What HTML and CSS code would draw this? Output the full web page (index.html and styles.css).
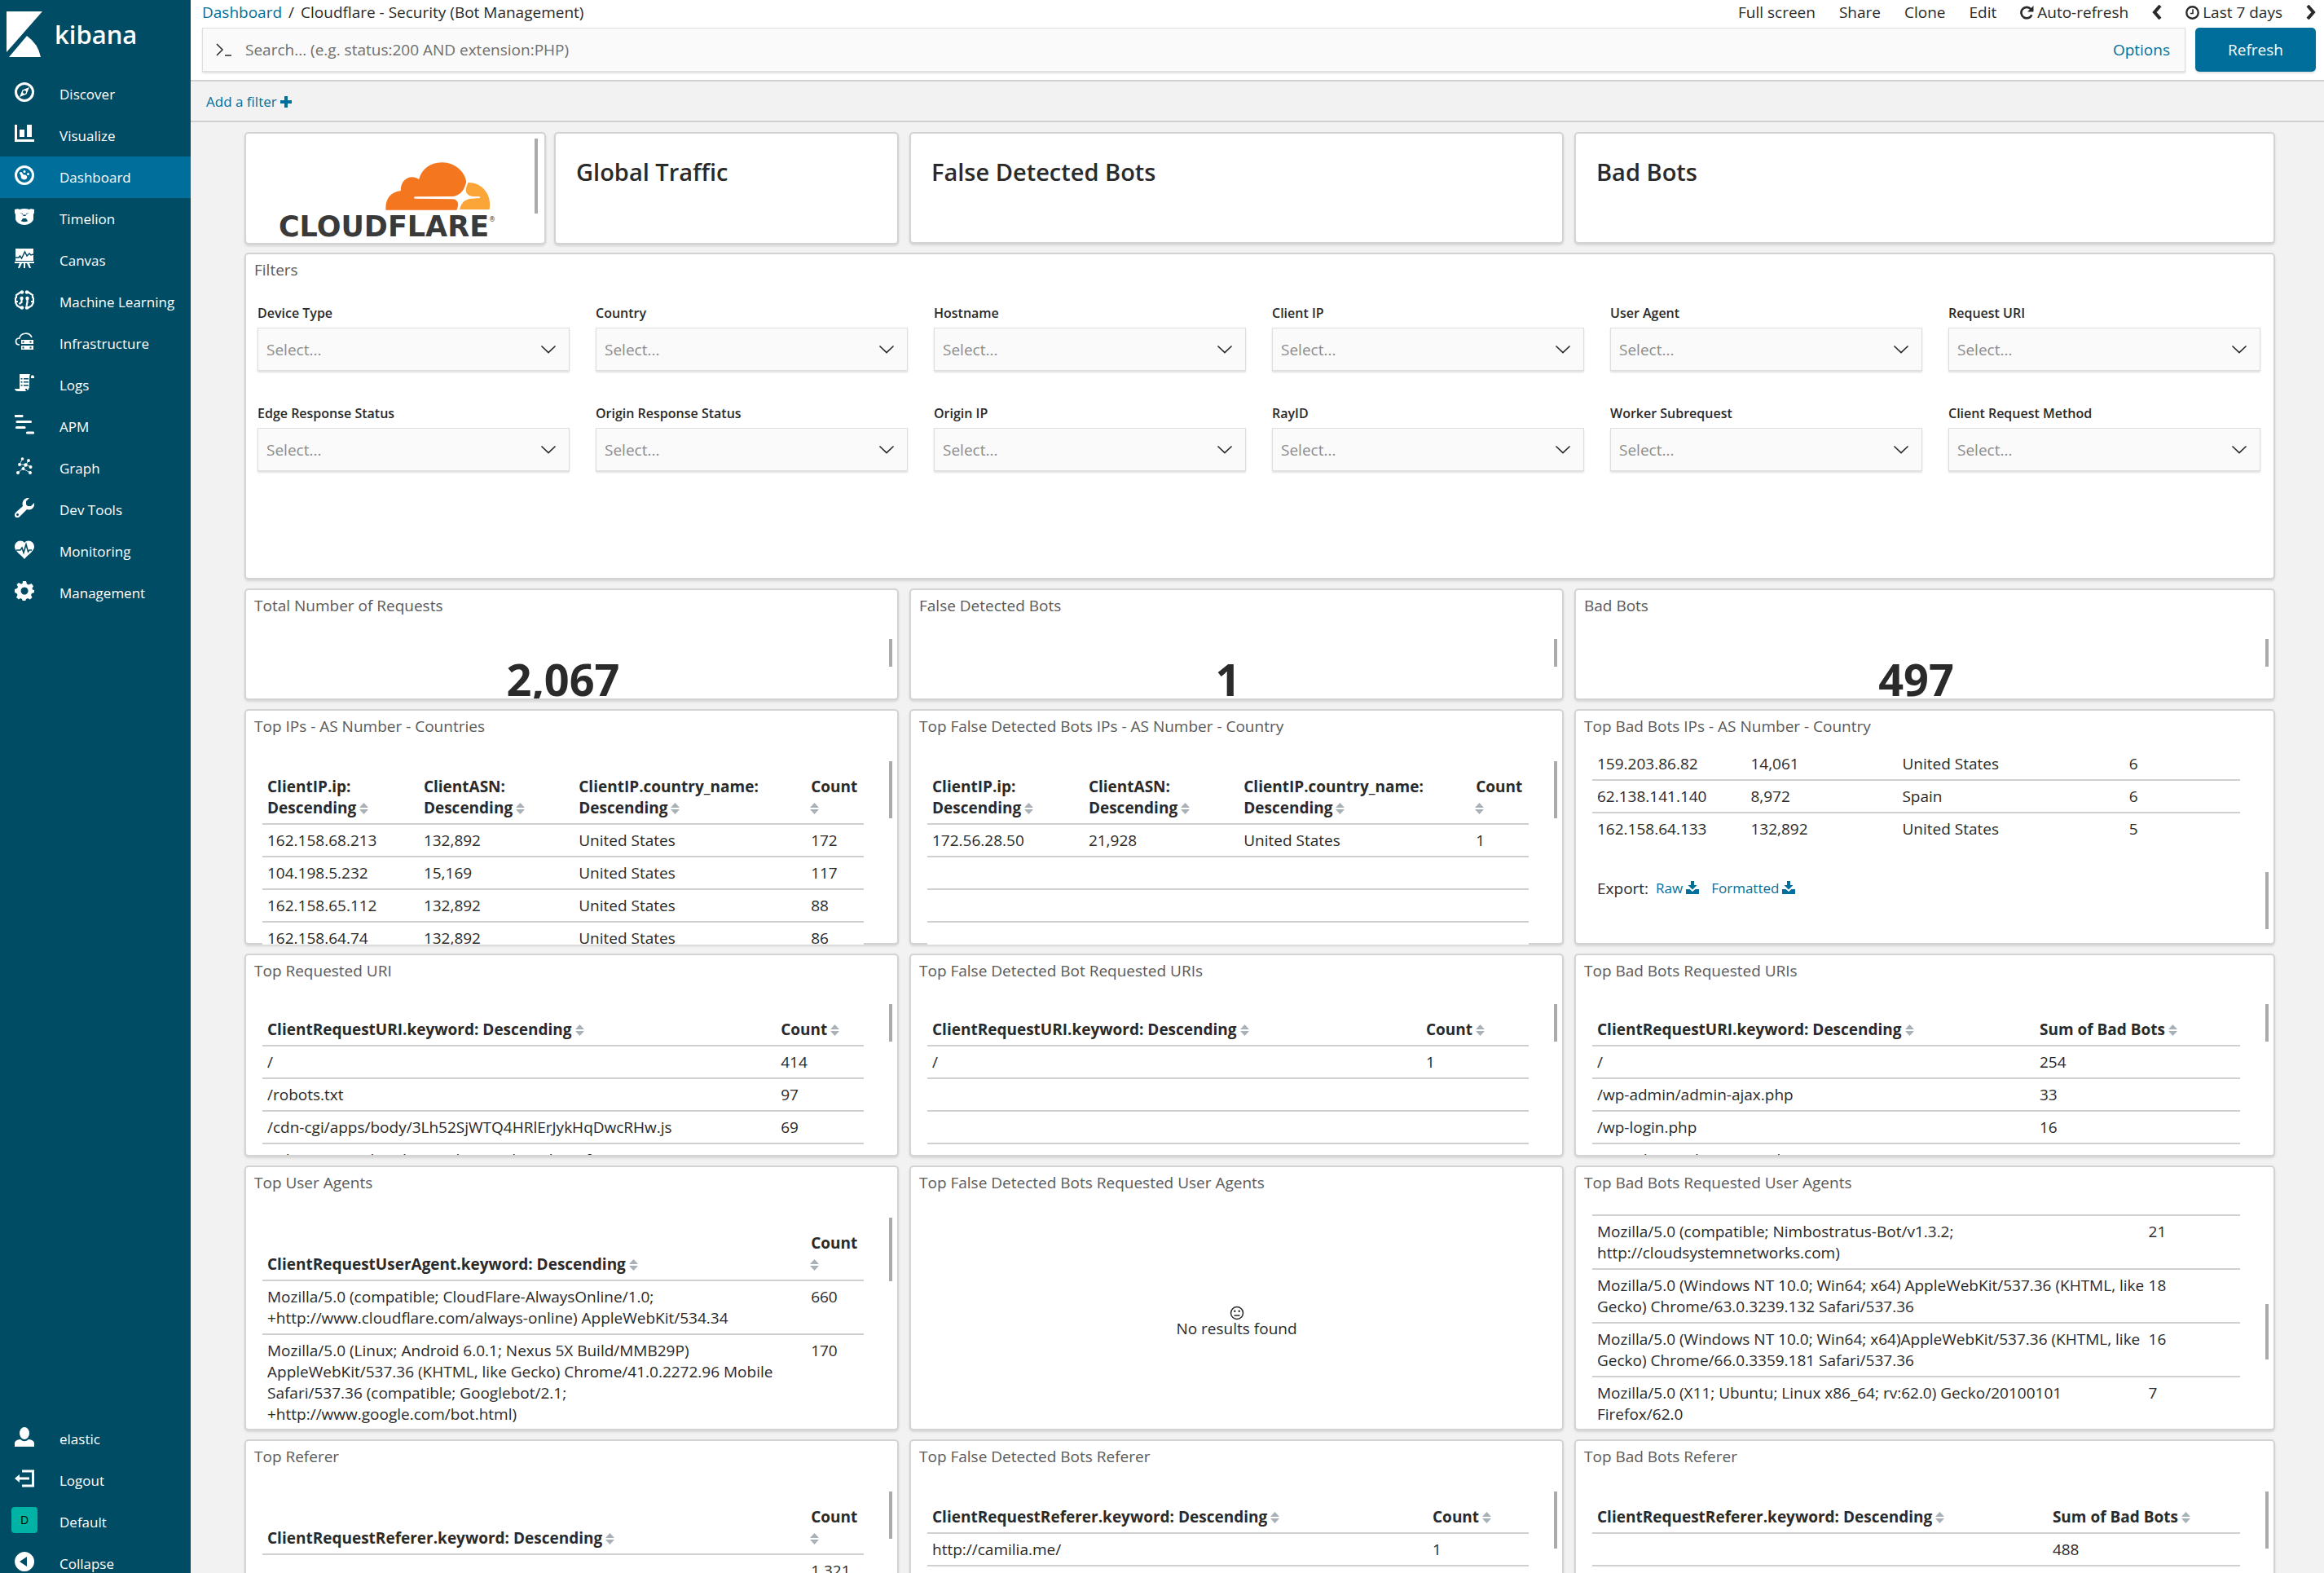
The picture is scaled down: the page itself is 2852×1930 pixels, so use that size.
FILE: index.html
```html
<!DOCTYPE html>
<html lang="en">
<head>
<meta charset="utf-8">
<title>Cloudflare - Security (Bot Management) - Kibana</title>
<link rel="stylesheet" href="styles.css">
</head>
<body>
<svg class="sprite" aria-hidden="true">
  <symbol id="sort" viewBox="0 0 11 16"><path d="M5.500 1l5.500 6H0zM5.500 15L0 9h11z"/></symbol>
  <symbol id="chevron" viewBox="0 0 18 10"><path d="M1 1l8 7.500L17 1" fill="none" stroke="currentColor" stroke-width="1.700" stroke-linecap="round"/></symbol>
  <symbol id="download" viewBox="0 0 16 16"><path d="M6 0h4v5h3.500L8 10.500 2.500 5H6z"/><path d="M0 10h4.500L8 13l3.500-3H16v6H0z"/></symbol>
</svg>
<div class="app">
  <nav class="sidebar" aria-label="Main">
    <a class="brand" href="#">
      <svg class="brand-mark" viewBox="0 0 44 56"><path d="M0 0h44L0 50z"/><path d="M25 30Q39 40 42 56H3z"/></svg>
      <span class="brand-name">kibana</span>
    </a>
    <div class="nav-list">
      <a class="nav-item" href="#"><svg class="nav-icon" viewBox="0 0 24 24"><circle cx="12" cy="12" r="10.500" fill="none" stroke="#fff" stroke-width="3"/><path d="M18 6l-3.500 8.500L6 18l3.500-8.500zm-6 4a2 2 0 1 0 .1 0z" fill-rule="evenodd"/></svg>Discover</a>
      <a class="nav-item" href="#"><svg class="nav-icon" viewBox="0 0 24 24"><path d="M0 1h3v18h21v3H0zM6 7h6v9H6zM15 1h6v15h-6z"/></svg>Visualize</a>
      <a class="nav-item nav-item-active" href="#" aria-current="page"><svg class="nav-icon" viewBox="0 0 24 24"><circle cx="12" cy="12" r="10.500" fill="none" stroke="#fff" stroke-width="3"/><circle cx="12" cy="7.500" r="1.500"/><circle cx="16.500" cy="10.500" r="1.500"/><path d="M6.500 8.500c1-1 2.500 0 3 1l1.500 2c3-.5 5 1.500 4 4-1 2.500-5 2.500-6.500.5C7 14 8.500 12.500 6.500 10.500c-.7-.7-.7-1.400 0-2z"/></svg>Dashboard</a>
      <a class="nav-item" href="#"><svg class="nav-icon" viewBox="0 0 24 24"><path fill-rule="evenodd" d="M0 3c3-1 5-1 6 0 4-1.500 8-1.500 12 0 1-1 3-1 6 0 .5 3 0 4-1 6v6c-1 4-6 7-11 7S2 19 1 15V9C0 7-.5 6 0 3zm6 4l4 2v-1zm12 0l-4 2v-1zM9.500 9.500c1 2 4 2 5 0zM8 17c0 1.500 8 1.500 8 0l-2-3h-4z"/></svg>Timelion</a>
      <a class="nav-item" href="#"><svg class="nav-icon" viewBox="0 0 24 24"><path d="M1 0h22v15H1zM0 16h24v2H0zM6 18h3l-3 6H4zM11 18h2v6h-2zM15 18h3l2 6h-2z"/><path d="M1 11h4l1.500-2 2 3 4-8 2.500 5 3-3 2 2 3-1" fill="none" stroke="#004c65" stroke-width="1.500"/></svg>Canvas</a>
      <a class="nav-item" href="#"><svg class="nav-icon" viewBox="0 0 24 24"><g fill="none" stroke="#fff" stroke-width="2.200"><path d="M8 2L2 6v4M1 9v6l2 4 5 3M16 2l6 4v4M23 9v6l-2 4-5 3M8.500 10v5l-3 2M15.500 10v5l-1 4M1 14h3M20 14h3"/></g><circle cx="9" cy="2.500" r="2.200"/><circle cx="15" cy="2.500" r="2.200"/><circle cx="9" cy="21.500" r="2.200"/><circle cx="15" cy="21.500" r="2.200"/><circle cx="8.500" cy="10" r="2.200"/><circle cx="15.500" cy="10" r="2.200"/></svg>Machine Learning</a>
      <a class="nav-item" href="#"><svg class="nav-icon" viewBox="0 0 24 24"><path d="M6 16C0 16 0 8 6 8c1-7 12-8 15-1" fill="none" stroke="#fff" stroke-width="1.700"/><path fill-rule="evenodd" d="M8 10h15v5H8zm1.500 1.500v2h2v-2zm9 0v2h2v-2zM8 17h15v5H8zm1.500 1.500v2h2v-2zm9 0v2h2v-2z"/></svg>Infrastructure</a>
      <a class="nav-item" href="#"><svg class="nav-icon" viewBox="0 0 24 24"><path fill-rule="evenodd" d="M6 1h13c-1 2-1 5-1 14 0 6-3 7-3 4H6zm1.500 5v1.500h2V6zm3.500 0v1.500h6V6zM7.500 10v1.500h2V10zm3.500 0v1.500h6V10zm-3.500 4v1.500h2V14zm3.500 0v1.500h6V14z"/><path d="M0 19h13c0 2 1 3 2 3H4c-2 0-4-1-4-3zM20 5c0-4 4-3 4 0v1h-4z"/></svg>Logs</a>
      <a class="nav-item" href="#"><svg class="nav-icon" viewBox="0 0 24 24"><path d="M0 1.500h9M3 8.500h16.500M2.500 15.500h9.500M15.500 22h7" fill="none" stroke="#fff" stroke-width="3.200" stroke-linecap="round"/></svg>APM</a>
      <a class="nav-item" href="#"><svg class="nav-icon" viewBox="0 0 24 24"><path d="M9.500 3L6 10h8l3-5M14 10l6 3M14 10l-4 5-6 5M10 15l9 5" fill="none" stroke="#fff" stroke-width=".8"/><circle cx="9.500" cy="3" r="1.800"/><circle cx="17" cy="5" r="1.900"/><circle cx="6" cy="10" r="1.900"/><circle cx="13.500" cy="10.500" r="2.200"/><circle cx="19.500" cy="13" r="2"/><circle cx="10.500" cy="15" r="2"/><circle cx="4" cy="20" r="2"/><circle cx="19" cy="20" r="2"/></svg>Graph</a>
      <a class="nav-item" href="#"><svg class="nav-icon" viewBox="0 0 24 24"><path fill-rule="evenodd" d="M18 0l-4 4v4l2 2h4l4-4c1 5-3 10-9 8L6 23c-4 3-8-1-5-5l9-8C8 4 13-1 18 0zM3.500 19a1.500 1.500 0 1 0 .1 0z"/></svg>Dev Tools</a>
      <a class="nav-item" href="#"><svg class="nav-icon" viewBox="0 0 24 24"><path d="M12 4C16-1 24 2 24 9c0 5-7 9-12 15C7 18 0 14 0 9 0 2 8-1 12 4z"/><path d="M2 13h5l2-3 2 6 3-10 2.500 9 1.500-2h3" fill="none" stroke="#004c65" stroke-width="1.600"/></svg>Monitoring</a>
      <a class="nav-item" href="#"><svg class="nav-icon" viewBox="0 0 24 24"><path fill-rule="evenodd" d="M10 0h4l1 3.500 2 1L20.500 3 23 6l-1.500 3 .5 1.500 2 .5v3l-3 1-1 2 1.500 3-2.500 2.500-3-1.500-2 1-1 3h-3l-1-3-2-1L5 22.500 2 20l1.500-3-1-2L0 14v-4l3-1 1-2-1.500-3L5 2l3 1.500 1.500-.5zM12 7.500a4.500 4.500 0 1 0 .1 0z"/></svg>Management</a>
    </div>
    <div class="nav-list nav-list-bottom">
      <a class="nav-item" href="#"><svg class="nav-icon" viewBox="0 0 24 24"><ellipse cx="12" cy="7.500" rx="6" ry="7.500"/><path d="M0 24v-4c0-3 3-4.500 7-5 3 3 7 3 10 0 4 .5 7 2 7 5v4z"/></svg>elastic</a>
      <a class="nav-item" href="#"><svg class="nav-icon" viewBox="0 0 24 24"><path d="M9 3h13.500v18H9M5 12h13" fill="none" stroke="#fff" stroke-width="3"/><path d="M0 12l6-5v10z"/></svg>Logout</a>
      <a class="nav-item" href="#"><span class="space-badge">D</span>Default</a>
      <button class="nav-item" type="button"><svg class="nav-icon" viewBox="0 0 24 24"><path fill-rule="evenodd" d="M12 0a12 12 0 1 0 .1 0zM15 6v12l-9-6z"/></svg>Collapse</button>
    </div>
  </nav>

  <div class="main">
    <header class="topbar">
      <div class="topbar-row">
        <div class="crumbs"><a class="link" href="#">Dashboard</a><span class="crumb-sep">/</span><span>Cloudflare - Security (Bot Management)</span></div>
        <div class="menu">
          <button class="menu-item" type="button">Full screen</button>
          <button class="menu-item" type="button">Share</button>
          <button class="menu-item" type="button">Clone</button>
          <button class="menu-item" type="button">Edit</button>
          <button class="menu-item" type="button"><svg class="menu-icon" viewBox="0 0 16 16"><path d="M13.500 10.500A6.300 6.300 0 1 1 12.500 4" fill="none" stroke="currentColor" stroke-width="2.500"/><path d="M15.500 0v7h-7z"/></svg>Auto-refresh</button>
          <button class="menu-item" type="button" aria-label="Back"><svg class="menu-arrow" viewBox="0 0 12 18"><path d="M10 1L3 9l7 8" fill="none" stroke="currentColor" stroke-width="4"/></svg></button>
          <button class="menu-item" type="button"><svg class="menu-icon" viewBox="0 0 16 16"><circle cx="8" cy="8" r="6.800" fill="none" stroke="currentColor" stroke-width="2.200"/><path d="M8.500 4v5H5.500" fill="none" stroke="currentColor" stroke-width="1.500"/></svg>Last 7 days</button>
          <button class="menu-item" type="button" aria-label="Forward"><svg class="menu-arrow" viewBox="0 0 12 18"><path d="M2 1l7 8-7 8" fill="none" stroke="currentColor" stroke-width="4"/></svg></button>
        </div>
      </div>
      <form class="query">
        <div class="query-box">
          <svg class="query-icon" viewBox="0 0 20 16"><path d="M1 1l7 7-7 7M11 15h8" fill="none" stroke="currentColor" stroke-width="1.500"/></svg>
          <input class="query-input" type="text" aria-label="Search" placeholder="Search... (e.g. status:200 AND extension:PHP)">
          <a class="link" href="#">Options</a>
        </div>
        <button class="refresh" type="button">Refresh</button>
      </form>
    </header>
    <div class="filterbar"><a class="link filter-add" href="#">Add a filter<svg class="plus-icon" viewBox="0 0 14 14"><path d="M5 0h4v5h5v4H9v5H5V9H0V5h5z"/></svg></a></div>

    <main class="dashboard">
      <div class="split">
        <section class="panel">
          <div class="logo-wrap">
            <div class="cf-logo">
              <svg class="cf-cloud" viewBox="558 177 386 177"><path fill="#f4761f" d="M559 353C555 312 580 284 614 283C612 255 630 232 656 232C668 232 675 236 681 240C690 205 720 178 766 178C815 178 852 215 855 250C848 277 838 297 808 303L665 304Q661 308 665 311L805 313C820 314 828 325 824 340L820 353Z"/><path fill="#fba437" d="M862 252C910 250 952 295 940 351L831 351C835 330 848 312 875 311L905 309Q907 306 905 304L880 303C860 300 850 290 855 270Z"/></svg>
              <span class="cf-name">CLOUDFLARE<span class="cf-reg">®</span></span>
            </div>
          </div>
          <span class="thumb thumb-logo"></span>
        </section>
        <section class="panel"><h1 class="heading">Global Traffic</h1></section>
      </div>
      <section class="panel"><h1 class="heading">False Detected Bots</h1></section>
      <section class="panel"><h1 class="heading">Bad Bots</h1></section>

      <section class="panel panel-wide">
        <h2 class="panel-title">Filters</h2>
        <form class="filters">
          <div class="field"><label for="f1">Device Type</label><div class="pick"><select id="f1"><option>Select...</option></select><svg><use href="#chevron"/></svg></div></div>
          <div class="field"><label for="f2">Country</label><div class="pick"><select id="f2"><option>Select...</option></select><svg><use href="#chevron"/></svg></div></div>
          <div class="field"><label for="f3">Hostname</label><div class="pick"><select id="f3"><option>Select...</option></select><svg><use href="#chevron"/></svg></div></div>
          <div class="field"><label for="f4">Client IP</label><div class="pick"><select id="f4"><option>Select...</option></select><svg><use href="#chevron"/></svg></div></div>
          <div class="field"><label for="f5">User Agent</label><div class="pick"><select id="f5"><option>Select...</option></select><svg><use href="#chevron"/></svg></div></div>
          <div class="field"><label for="f6">Request URI</label><div class="pick"><select id="f6"><option>Select...</option></select><svg><use href="#chevron"/></svg></div></div>
          <div class="field"><label for="f7">Edge Response Status</label><div class="pick"><select id="f7"><option>Select...</option></select><svg><use href="#chevron"/></svg></div></div>
          <div class="field"><label for="f8">Origin Response Status</label><div class="pick"><select id="f8"><option>Select...</option></select><svg><use href="#chevron"/></svg></div></div>
          <div class="field"><label for="f9">Origin IP</label><div class="pick"><select id="f9"><option>Select...</option></select><svg><use href="#chevron"/></svg></div></div>
          <div class="field"><label for="f10">RayID</label><div class="pick"><select id="f10"><option>Select...</option></select><svg><use href="#chevron"/></svg></div></div>
          <div class="field"><label for="f11">Worker Subrequest</label><div class="pick"><select id="f11"><option>Select...</option></select><svg><use href="#chevron"/></svg></div></div>
          <div class="field"><label for="f12">Client Request Method</label><div class="pick"><select id="f12"><option>Select...</option></select><svg><use href="#chevron"/></svg></div></div>
        </form>
      </section>

      <section class="panel"><h2 class="panel-title">Total Number of Requests</h2><div class="panel-body"><p class="metric">2,067</p></div><span class="thumb thumb-metric"></span></section>
      <section class="panel"><h2 class="panel-title">False Detected Bots</h2><div class="panel-body"><p class="metric">1</p></div><span class="thumb thumb-metric"></span></section>
      <section class="panel"><h2 class="panel-title">Bad Bots</h2><div class="panel-body"><p class="metric">497</p></div><span class="thumb thumb-metric"></span></section>

      <section class="panel">
        <h2 class="panel-title">Top IPs - AS Number - Countries</h2>
        <div class="panel-body panel-body-bleed">
          <table class="data">
            <colgroup><col style="width:26%"><col style="width:25.8%"><col style="width:38.6%"><col></colgroup>
            <thead><tr><th>ClientIP.ip: Descending <svg class="sort"><use href="#sort"/></svg></th><th>ClientASN: Descending <svg class="sort"><use href="#sort"/></svg></th><th>ClientIP.country_name: Descending <svg class="sort"><use href="#sort"/></svg></th><th>Count <svg class="sort"><use href="#sort"/></svg></th></tr></thead>
            <tbody>
              <tr><td>162.158.68.213</td><td>132,892</td><td>United States</td><td>172</td></tr>
              <tr><td>104.198.5.232</td><td>15,169</td><td>United States</td><td>117</td></tr>
              <tr><td>162.158.65.112</td><td>132,892</td><td>United States</td><td>88</td></tr>
              <tr><td>162.158.64.74</td><td>132,892</td><td>United States</td><td>86</td></tr>
            </tbody>
          </table>
        </div>
        <span class="thumb thumb-ips"></span>
      </section>
      <section class="panel">
        <h2 class="panel-title">Top False Detected Bots IPs - AS Number - Country</h2>
        <div class="panel-body panel-body-bleed">
          <table class="data">
            <colgroup><col style="width:26%"><col style="width:25.8%"><col style="width:38.6%"><col></colgroup>
            <thead><tr><th>ClientIP.ip: Descending <svg class="sort"><use href="#sort"/></svg></th><th>ClientASN: Descending <svg class="sort"><use href="#sort"/></svg></th><th>ClientIP.country_name: Descending <svg class="sort"><use href="#sort"/></svg></th><th>Count <svg class="sort"><use href="#sort"/></svg></th></tr></thead>
            <tbody>
              <tr><td>172.56.28.50</td><td>21,928</td><td>United States</td><td>1</td></tr>
              <tr><td colspan="4">&nbsp;</td></tr>
              <tr><td colspan="4">&nbsp;</td></tr>
              <tr><td colspan="4">&nbsp;</td></tr>
            </tbody>
          </table>
        </div>
        <span class="thumb thumb-ips"></span>
      </section>
      <section class="panel">
        <h2 class="panel-title">Top Bad Bots IPs - AS Number - Country</h2>
        <div class="panel-body panel-body-mid">
          <table class="data data-last">
            <colgroup><col style="width:23.7%"><col style="width:23.4%"><col style="width:35%"><col></colgroup>
            <tbody>
              <tr><td>159.203.86.82</td><td>14,061</td><td>United States</td><td>6</td></tr>
              <tr><td>62.138.141.140</td><td>8,972</td><td>Spain</td><td>6</td></tr>
              <tr><td>162.158.64.133</td><td>132,892</td><td>United States</td><td>5</td></tr>
            </tbody>
          </table>
          <p class="export"><span>Export:</span><a class="link" href="#">Raw<svg class="dl"><use href="#download"/></svg></a><a class="link" href="#">Formatted<svg class="dl"><use href="#download"/></svg></a></p>
        </div>
        <span class="thumb thumb-ips-end"></span>
      </section>

      <section class="panel">
        <h2 class="panel-title">Top Requested URI</h2>
        <div class="panel-body panel-body-tight">
          <table class="data">
            <colgroup><col style="width:85.4%"><col></colgroup>
            <thead><tr><th>ClientRequestURI.keyword: Descending <svg class="sort"><use href="#sort"/></svg></th><th>Count <svg class="sort"><use href="#sort"/></svg></th></tr></thead>
            <tbody>
              <tr><td>/</td><td>414</td></tr>
              <tr><td>/robots.txt</td><td>97</td></tr>
              <tr><td>/cdn-cgi/apps/body/3Lh52SjWTQ4HRlErJykHqDwcRHw.js</td><td>69</td></tr>
              <tr><td>/cdn-cgi/apps/head/xNmKbPmY3dAUOkMmfDrtvpMKA.js</td><td>54</td></tr>
            </tbody>
          </table>
        </div>
        <span class="thumb thumb-uri"></span>
      </section>
      <section class="panel">
        <h2 class="panel-title">Top False Detected Bot Requested URIs</h2>
        <div class="panel-body panel-body-tight">
          <table class="data">
            <colgroup><col style="width:82.1%"><col></colgroup>
            <thead><tr><th>ClientRequestURI.keyword: Descending <svg class="sort"><use href="#sort"/></svg></th><th>Count <svg class="sort"><use href="#sort"/></svg></th></tr></thead>
            <tbody>
              <tr><td>/</td><td>1</td></tr>
              <tr><td colspan="2">&nbsp;</td></tr>
              <tr><td colspan="2">&nbsp;</td></tr>
              <tr><td colspan="2">&nbsp;</td></tr>
            </tbody>
          </table>
        </div>
        <span class="thumb thumb-uri"></span>
      </section>
      <section class="panel">
        <h2 class="panel-title">Top Bad Bots Requested URIs</h2>
        <div class="panel-body panel-body-tight">
          <table class="data">
            <colgroup><col style="width:68.3%"><col></colgroup>
            <thead><tr><th>ClientRequestURI.keyword: Descending <svg class="sort"><use href="#sort"/></svg></th><th>Sum of Bad Bots <svg class="sort"><use href="#sort"/></svg></th></tr></thead>
            <tbody>
              <tr><td>/</td><td>254</td></tr>
              <tr><td>/wp-admin/admin-ajax.php</td><td>33</td></tr>
              <tr><td>/wp-login.php</td><td>16</td></tr>
              <tr><td>/wp-admin/admin-post.php</td><td>13</td></tr>
            </tbody>
          </table>
        </div>
        <span class="thumb thumb-uri"></span>
      </section>

      <section class="panel">
        <h2 class="panel-title">Top User Agents</h2>
        <div class="panel-body">
          <table class="data">
            <colgroup><col style="width:90.4%"><col></colgroup>
            <thead><tr><th>ClientRequestUserAgent.keyword: Descending <svg class="sort"><use href="#sort"/></svg></th><th>Count <svg class="sort"><use href="#sort"/></svg></th></tr></thead>
            <tbody>
              <tr><td>Mozilla/5.0 (compatible; CloudFlare-AlwaysOnline/1.0; +http://www.cloudflare.com/always-online) AppleWebKit/534.34</td><td>660</td></tr>
              <tr><td>Mozilla/5.0 (Linux; Android 6.0.1; Nexus 5X Build/MMB29P) AppleWebKit/537.36 (KHTML, like Gecko) Chrome/41.0.2272.96 Mobile Safari/537.36 (compatible; Googlebot/2.1; +http://www.google.com/bot.html)</td><td>170</td></tr>
            </tbody>
          </table>
        </div>
        <span class="thumb thumb-agents"></span>
      </section>
      <section class="panel">
        <h2 class="panel-title">Top False Detected Bots Requested User Agents</h2>
        <div class="panel-body panel-body-empty">
          <svg class="meh" viewBox="0 0 18 18"><circle cx="9" cy="9" r="7.500" fill="none" stroke="currentColor" stroke-width="1.500"/><circle cx="6.300" cy="6.800" r="1.200"/><circle cx="11.700" cy="6.800" r="1.200"/><path d="M5.500 12h7" stroke="currentColor" stroke-width="1.500"/></svg>
          <p class="empty-text">No results found</p>
        </div>
      </section>
      <section class="panel">
        <h2 class="panel-title">Top Bad Bots Requested User Agents</h2>
        <div class="panel-body panel-body-cut">
          <table class="data data-last">
            <colgroup><col style="width:85.6%"><col></colgroup>
            <tbody>
              <tr><td>Mozilla/5.0 (compatible; Nimbostratus-Bot/v1.3.2; http://cloudsystemnetworks.com)</td><td>21</td></tr>
              <tr><td>Mozilla/5.0 (Windows NT 10.0; Win64; x64) AppleWebKit/537.36 (KHTML, like Gecko) Chrome/63.0.3239.132 Safari/537.36</td><td>18</td></tr>
              <tr><td>Mozilla/5.0 (Windows NT 10.0; Win64; x64)AppleWebKit/537.36 (KHTML, like Gecko) Chrome/66.0.3359.181 Safari/537.36</td><td>16</td></tr>
              <tr><td>Mozilla/5.0 (X11; Ubuntu; Linux x86_64; rv:62.0) Gecko/20100101 Firefox/62.0</td><td>7</td></tr>
            </tbody>
          </table>
        </div>
        <span class="thumb thumb-agents-mid"></span>
      </section>

      <section class="panel">
        <h2 class="panel-title">Top Referer</h2>
        <div class="panel-body">
          <table class="data">
            <colgroup><col style="width:90.4%"><col></colgroup>
            <thead><tr><th>ClientRequestReferer.keyword: Descending <svg class="sort"><use href="#sort"/></svg></th><th>Count <svg class="sort"><use href="#sort"/></svg></th></tr></thead>
            <tbody><tr><td>&nbsp;</td><td>1,321</td></tr></tbody>
          </table>
        </div>
        <span class="thumb thumb-referer"></span>
      </section>
      <section class="panel">
        <h2 class="panel-title">Top False Detected Bots Referer</h2>
        <div class="panel-body">
          <table class="data">
            <colgroup><col style="width:83.2%"><col></colgroup>
            <thead><tr><th>ClientRequestReferer.keyword: Descending <svg class="sort"><use href="#sort"/></svg></th><th>Count <svg class="sort"><use href="#sort"/></svg></th></tr></thead>
            <tbody><tr><td>http://camilia.me/</td><td>1</td></tr></tbody>
          </table>
        </div>
        <span class="thumb thumb-ips"></span>
      </section>
      <section class="panel">
        <h2 class="panel-title">Top Bad Bots Referer</h2>
        <div class="panel-body">
          <table class="data">
            <colgroup><col style="width:70.3%"><col></colgroup>
            <thead><tr><th>ClientRequestReferer.keyword: Descending <svg class="sort"><use href="#sort"/></svg></th><th>Sum of Bad Bots <svg class="sort"><use href="#sort"/></svg></th></tr></thead>
            <tbody><tr><td>&nbsp;</td><td>488</td></tr></tbody>
          </table>
        </div>
        <span class="thumb thumb-ips"></span>
      </section>
    </main>
  </div>
</div>
</body>
</html>
```

FILE: styles.css
```css
* { box-sizing: border-box; }

body {
  margin: 0;
  font: 19px/26px "Open Sans", "Noto Sans", sans-serif;
  color: #2a2a2a;
  background: #f2f2f2;
}

h1, h2, p { margin: 0; }

button, input, select { font: inherit; color: inherit; }

button { border: 0; background: none; padding: 0; cursor: pointer; }

svg { fill: currentColor; }

.sprite { display: none; }

.link { color: #006f9c; text-decoration: none; }

.app { display: flex; height: 100vh; overflow: hidden; }

/* Sidebar */
.sidebar {
  flex: 0 0 234px;
  display: flex;
  flex-direction: column;
  background: #004c65;
  color: #fff;
  overflow: hidden;
}

.brand {
  display: flex;
  gap: 15px;
  height: 90px;
  padding: 14px 8px 0;
  color: #fff;
  text-decoration: none;
}

.brand-mark { width: 44px; height: 56px; }

.brand-name { font-size: 31px; font-weight: 600; line-height: 56px; }

.nav-list { display: flex; flex-direction: column; }

.nav-list-bottom { margin-top: auto; margin-bottom: -14px; }

.nav-item {
  display: flex;
  align-items: center;
  height: 51px;
  flex: none;
  padding-left: 18px;
  font-size: 17px;
  color: #fff;
  text-decoration: none;
}

.nav-item-active { background: #006e9b; }

.nav-icon { width: 24px; height: 24px; margin: 0 31px 5px 0; }

.space-badge {
  width: 32px;
  margin: 0 27px 5px -4px;
  border-radius: 4px;
  background: #00b3a4;
  color: #000;
  font-size: 14px;
  line-height: 32px;
  text-align: center;
}

/* Top bar */
.main { flex: 1; min-width: 0; display: flex; flex-direction: column; }

.topbar {
  flex: none;
  padding: 2px 10px 10px 14px;
  background: #fff;
  border-bottom: 2px solid #d0d0d0;
}

.topbar-row { display: flex; justify-content: space-between; margin-bottom: 6px; }

.crumb-sep { margin: 0 8px; }

.menu { display: flex; gap: 29px; }

.menu-item { display: flex; align-items: center; }

.menu-icon { width: 17px; height: 17px; margin-right: 4px; }

.menu-arrow { width: 12px; height: 18px; }

.query { display: flex; gap: 12px; }

.query-box {
  flex: 1;
  display: flex;
  align-items: center;
  gap: 16px;
  height: 54px;
  padding: 0 18px 0 16px;
  background: #fafafa;
  border: 1px solid #dedede;
  box-shadow: 0 2px 2px rgba(0, 0, 0, .12);
}

.query-icon { width: 20px; height: 16px; }

.query-input {
  flex: 1;
  min-width: 0;
  padding: 0;
  border: 0;
  outline: 0;
  background: none;
}

.query-input::placeholder { color: #6e6e6e; opacity: 1; }

.refresh {
  width: 148px;
  height: 54px;
  border-radius: 5px;
  background: #006e9b;
  color: #fff;
  box-shadow: 0 2px 2px rgba(0, 0, 0, .12);
}

.filterbar {
  flex: none;
  padding: 12px 19px 10px;
  border-bottom: 2px solid #d0d0d0;
}

.filter-add { display: flex; align-items: center; gap: 4px; font-size: 17px; }

.plus-icon { width: 14px; height: 14px; }

/* Dashboard grid */
.dashboard {
  display: grid;
  grid-template-columns: 803fr 803fr 860fr;
  grid-template-rows: 137px 401px 137px 289px 249px 325px 288px;
  gap: 11px 13px;
  flex: 1;
  min-height: 0;
  overflow: hidden;
  padding: 12px 60px 0 66px;
}

.split { display: grid; grid-template-columns: 370fr 423fr; gap: 10px; }

.panel {
  position: relative;
  display: flex;
  flex-direction: column;
  min-width: 0;
  background: #fff;
  border: 2px solid #d3d3d3;
  border-radius: 5px;
  box-shadow: 0 2px 3px rgba(0, 0, 0, .12);
}

.panel-wide { grid-column: 1 / -1; }

.heading { padding: 28px 25px 0; font-size: 29px; font-weight: 600; line-height: 38px; }

.panel-title {
  flex: none;
  padding: 6px 10px 26px;
  font-size: 19px;
  font-weight: 400;
  color: #5a5a5a;
}

.panel-body {
  flex: 1;
  min-height: 0;
  overflow: hidden;
  padding: 16px 41px 0 20px;
}

/* Content of this list runs over the panel's lower border */
.panel-body-bleed { margin-bottom: -2px; }

.panel-body-tight { padding-top: 14px; }

.panel-body-mid { margin-top: -12px; padding-top: 0; }

.panel-body-cut { padding-top: 0; }

.panel-body-cut .data { border-top: 2px solid #d0d0d0; }

.panel-body-cut .data td + td { padding-left: 2px; }

.panel-body-empty {
  display: flex;
  flex-direction: column;
  align-items: center;
  justify-content: center;
  padding: 0;
}

.meh { width: 18px; height: 18px; }

.empty-text { line-height: 21px; }

.metric {
  font-size: 54px;
  font-weight: 700;
  line-height: 70px;
  text-align: center;
}

/* Overlay scroll thumbs */
.thumb {
  position: absolute;
  right: 6px;
  width: 4px;
  background: #aaa;
}

.thumb-logo { top: 6px; right: 8px; height: 92px; }
.thumb-metric { top: 60px; height: 34px; }
.thumb-ips { top: 62px; height: 70px; }
.thumb-ips-end { top: 198px; height: 70px; }
.thumb-uri { top: 60px; height: 46px; }
.thumb-agents { top: 62px; height: 78px; }
.thumb-agents-mid { top: 168px; height: 68px; }
.thumb-referer { top: 62px; height: 58px; }

/* Logo panel */
.logo-wrap { display: flex; justify-content: center; padding: 35px 20px 0 0; }

.cf-logo { display: flex; flex-direction: column; align-items: flex-end; }

.cf-cloud { width: 129px; height: 59px; margin-right: 6px; }

.cf-name {
  display: flex;
  font-family: "DejaVu Sans", sans-serif;
  font-size: 35px;
  font-weight: 700;
  line-height: 40px;
  color: #3a3a3a;
}

.cf-reg { font-size: 8px; font-weight: 400; line-height: 24px; }

/* Filter form */
.filters {
  display: grid;
  grid-template-columns: repeat(6, 1fr);
  gap: 41px 32px;
  padding: 3px 16px 0 14px;
}

.field { display: flex; flex-direction: column; gap: 7px; }

.field label { font-size: 16px; font-weight: 600; line-height: 22px; }

.pick { position: relative; }

.pick select {
  display: block;
  width: 100%;
  height: 53px;
  padding: 0 10px;
  appearance: none;
  background: #fafafa;
  border: 1px solid #dedede;
  border-radius: 0;
  box-shadow: 0 2px 2px rgba(0, 0, 0, .12);
  color: #8c8c8c;
}

.pick svg {
  position: absolute;
  right: 17px;
  top: 22px;
  width: 18px;
  height: 10px;
  pointer-events: none;
}

/* Data tables */
.data {
  width: 100%;
  table-layout: fixed;
  border-spacing: 0;
  background: #fff;
}

.data th, .data td {
  padding: 6px 0 6px 6px;
  border-bottom: 2px solid #d0d0d0;
  text-align: left;
  vertical-align: top;
}

.data th { vertical-align: bottom; font-weight: 700; }

.data-last tr:last-child td { border-bottom: 0; }

.sort { width: 11px; height: 16px; margin-left: -1px; color: #a9b1b8; vertical-align: -2px; }

.export { display: flex; gap: 15px; padding: 41px 0 0 6px; }

.export span { margin-right: -6px; }

.export a { font-size: 17px; }

.dl { width: 16px; height: 16px; margin-left: 4px; vertical-align: -1px; }
```
